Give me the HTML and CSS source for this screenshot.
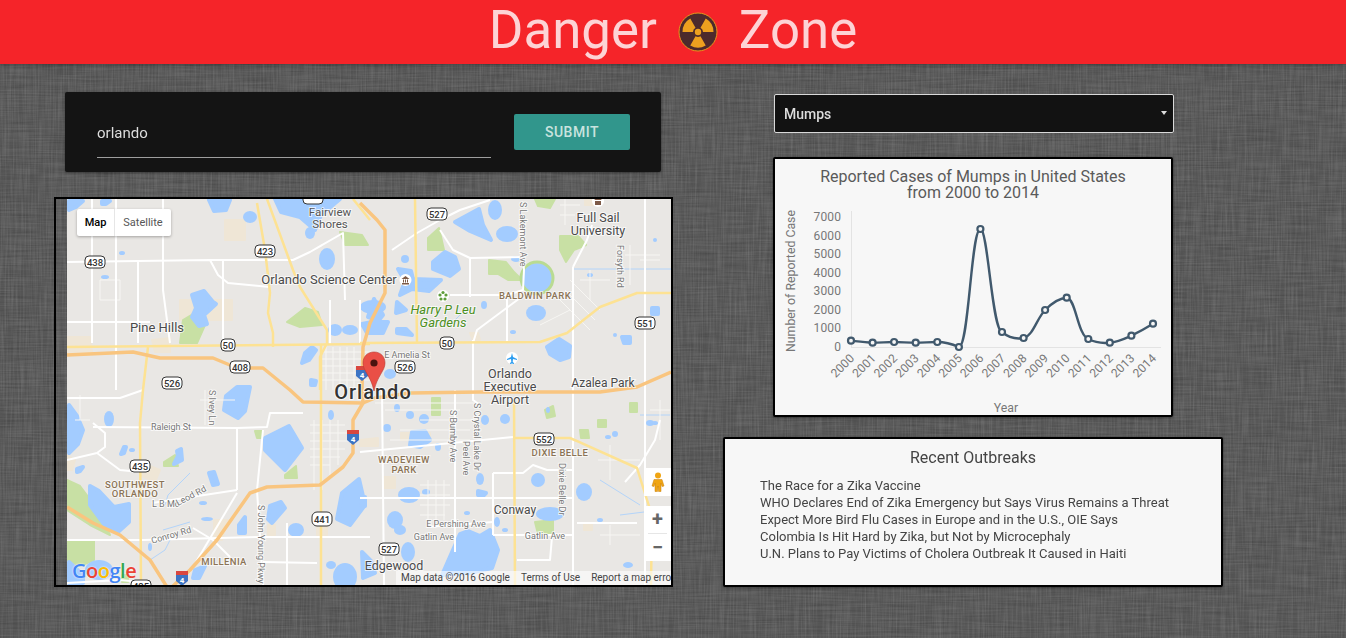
FILE: index.html
```html
<!DOCTYPE html>
<html>
<head>
	<meta charset="utf-8">
	<title>Danger Zone</title>
	<link rel="stylesheet" href="styles.css">
</head>
<body>
	<!-- linen background -->
	<svg class="linen" width="100%" height="100%">
		<filter id="threadsH" x="0" y="0" width="100%" height="100%">
			<feTurbulence type="fractalNoise" baseFrequency=".025 .6" numOctaves="2" seed="4"/>
			<feColorMatrix type="matrix" values="0 0 0 0 0  0 0 0 0 0  0 0 0 0 0  .3 0 0 0 -.07"/>
		</filter>
		<filter id="threadsV" x="0" y="0" width="100%" height="100%">
			<feTurbulence type="fractalNoise" baseFrequency=".6 .025" numOctaves="2" seed="9"/>
			<feColorMatrix type="matrix" values="0 0 0 0 1  0 0 0 0 1  0 0 0 0 1  .2 0 0 0 -.07"/>
		</filter>
		<rect width="100%" height="100%" filter="url(#threadsH)"/>
		<rect width="100%" height="100%" filter="url(#threadsV)"/>
	</svg>

	<header class="topbar">
		<h1>Danger</h1>
		<svg class="hazard" viewBox="0 0 40 40">
			<circle class="hazard-disc" cx="20" cy="20" r="19"/>
			<path class="hazard-blade" d="M22.5 24.33L27.75 33.42A15.5 15.5 0 0 1 12.25 33.42L17.5 24.33A5 5 0 0 0 22.5 24.33Z"/>
			<path class="hazard-blade" d="M22.5 15.67L27.75 6.58A15.5 15.5 0 0 1 35.5 20L25 20A5 5 0 0 0 22.5 15.67Z"/>
			<path class="hazard-blade" d="M15 20L4.5 20A15.5 15.5 0 0 1 12.25 6.58L17.5 15.67A5 5 0 0 0 15 20Z"/>
			<circle class="hazard-blade" cx="20" cy="20" r="3.2"/>
		</svg>
		<h1>Zone</h1>
	</header>

	<main class="layout">
		<section class="left">
			<form class="search">
				<input class="search-input" type="text" value="orlando">
				<button class="search-btn" type="button">SUBMIT</button>
			</form>

			<div class="map">
				<div class="map-canvas">
					<svg class="map-art" viewBox="67 199 604 386">
						<rect x="67" y="199" width="604" height="386" fill="#e9e7e4"/>

						<!-- parks and built up patches -->
						<g class="patch">
							<path d="M67 337L90 337L92 352L67 353Z"/>
							<path d="M152 340L170 338L170 352L155 352Z"/>
							<path d="M383 477L395 477L395 488L383 488Z"/>
							<path d="M268 525L275 525L275 535L268 535Z"/>
							<path d="M214 520L228 520L222 540L214 540Z"/>
							<path d="M317 525L327 525L327 535L317 535Z"/>
							<path d="M473 340L470 333L478 333L480 340Z"/>
							<path d="M584 523L592 523L592 530L584 530Z"/>
							<path d="M360 440L378 438L378 446L360 446Z"/>
							<path d="M401 433L430 433L430 440L401 440Z"/>
							<path d="M142 463L160 470L155 482L142 476Z"/>
							<path d="M225 220L245 220L245 240L225 240Z"/>
							<path d="M180 300L232 300L232 320L180 320Z"/>
							<path d="M585 199L600 199L600 205L585 205Z"/>
							<path d="M67 455L75 460L72 470L67 470Z"/>
						</g>
						<g class="park">
							<path d="M180 343L183 320L198 311L205 325L197 343Z"/>
							<path d="M287 322L305 308L318 312L322 325L300 327Z"/>
							<path d="M340 232L362 235L368 245L345 245Z"/>
							<path d="M428 238L439 228L444 250L428 250Z"/>
							<path d="M489 260L506 262L514 272L522 280L508 280L498 274L489 274Z"/>
							<path d="M560 236L578 236L586 245L574 250L566 262L560 250Z"/>
							<path d="M535 199L555 199L550 208L538 206Z"/>
							<path d="M67 480L80 486L98 510L110 535L90 525L67 510Z"/>
							<path d="M164 462L175 455L178 466L164 466Z"/>
							<path d="M285 475L296 466L297 478L285 478Z"/>
							<path d="M67 541L94 541L94 560L80 566L67 560Z"/>
							<path d="M535 522L553 520L553 534L538 534Z"/>
							<path d="M432 398L440 398L440 415L432 415Z"/>
							<path d="M545 410L553 406L555 416L547 418Z"/>
							<path d="M580 430L588 430L589 438L581 438Z"/>
							<path d="M598 420L606 420L606 427L598 427Z"/>
							<path d="M630 403L637 403L637 412L630 412Z"/>
							<path d="M255 431L262 431L262 438L257 438Z"/>
							<path d="M122 575L128 575L128 582L122 582Z"/>
						</g>

						<!-- water -->
						<g class="water">
							<path d="M69 201L83 201L76 207L69 210Z"/>
							<path d="M102 201L110 201L106 204L102 204Z"/>
							<path d="M209 200L230 200L226 210L214 211Z"/>
							<ellipse cx="250" cy="217" rx="7" ry="6"/>
							<path d="M275 199L340 199L321 215L315 230L300 217L281 212Z"/>
							<ellipse cx="310" cy="233" rx="5" ry="6"/>
							<ellipse cx="327" cy="259" rx="8" ry="11"/>
							<path d="M192 295L204 291L213 302L216 304L204 315L207 324L199 326L192 317L196 308Z"/>
							<ellipse cx="122" cy="253" rx="3" ry="2"/>
							<ellipse cx="105" cy="277" rx="4" ry="2"/>
							<ellipse cx="373" cy="307" rx="13" ry="7"/>
							<path d="M374 299L383 315L379 320L368 317Z"/>
							<path d="M455 222L479 209L483 225L491 240L470 231Z"/>
							<ellipse cx="495" cy="210" rx="7" ry="10"/>
							<ellipse cx="507" cy="234" rx="11" ry="8"/>
							<path d="M433 262L445 252L455 257L459 269L450 276L433 269Z"/>
							<path d="M398 269L411 271L413 279L441 280L429 291L412 289L400 295L405 281Z"/>
							<ellipse cx="405" cy="259" rx="4" ry="4"/>
							<ellipse cx="537" cy="278" rx="15" ry="15"/>
							<ellipse cx="516" cy="259" rx="5" ry="3"/>
							<ellipse cx="536" cy="313" rx="10" ry="8"/>
							<path d="M559 339L570 346L569 357L560 360L550 354L547 347Z"/>
							<ellipse cx="484" cy="305" rx="3" ry="4"/>
							<path d="M362 324L372 322L388 322L383 333L367 333Z"/>
							<path d="M397 302L406 310L396 313Z"/>
							<path d="M397 329L406 329L412 335L397 333Z"/>
							<ellipse cx="335" cy="330" rx="7" ry="6"/>
							<ellipse cx="350" cy="330" rx="8" ry="5"/>
							<path d="M312 347L316 350L309 360L302 363L305 353Z"/>
							<path d="M311 380L316 381L315 385L311 385Z"/>
							<ellipse cx="390" cy="374" rx="6" ry="5"/>
							<path d="M226 396L237 387L250 387L245 411L238 418L224 410Z"/>
							<path d="M265 438L289 426L302 448L285 470L265 450Z"/>
							<path d="M69 405L77 416L83 430L78 444L69 453Z"/>
							<ellipse cx="109" cy="419" rx="5" ry="8"/>
							<path d="M124 447L126 447L124 453L121 454Z"/>
							<path d="M177 451L181 449L182 460L174 464L178 456Z"/>
							<path d="M209 473L214 472L218 484L213 485Z"/>
							<path d="M77 469L83 467L80 471L77 472Z"/>
							<path d="M90 486L99 491L114 507L129 504L129 522L118 532L104 524L90 505Z"/>
							<path d="M239 525L245 517L245 533L239 533Z"/>
							<path d="M270 506L281 502L285 508L272 523L268 519Z"/>
							<ellipse cx="296" cy="530" rx="8" ry="7"/>
							<path d="M342 493L359 479L365 505L350 525L337 519Z"/>
							<ellipse cx="331" cy="415" rx="3" ry="5"/>
							<ellipse cx="99" cy="570" rx="14" ry="10"/>
							<path d="M195 570L205 566L199 578L193 578Z"/>
							<ellipse cx="345" cy="577" rx="12" ry="14"/>
							<ellipse cx="331" cy="565" rx="5" ry="4"/>
							<path d="M69 562L83 575L83 583L69 583Z"/>
							<ellipse cx="409" cy="495" rx="11" ry="8"/>
							<ellipse cx="426" cy="492" rx="4" ry="3"/>
							<ellipse cx="395" cy="520" rx="8" ry="9"/>
							<ellipse cx="400" cy="530" rx="6" ry="5"/>
							<path d="M361 497L365 497L365 506L361 506Z"/>
							<ellipse cx="480" cy="479" rx="4" ry="6"/>
							<path d="M478 491L486 493L483 496L478 495Z"/>
							<path d="M460 534L468 531L480 536L490 530L498 550L492 568L470 573L442 575Z"/>
							<ellipse cx="408" cy="552" rx="7" ry="10"/>
							<path d="M362 552L371 561L375 573L363 578Z"/>
							<ellipse cx="538" cy="480" rx="7" ry="7"/>
							<ellipse cx="584" cy="492" rx="8" ry="9"/>
							<ellipse cx="550" cy="514" rx="14" ry="7"/>
							<ellipse cx="497" cy="522" rx="3" ry="5"/>
							<ellipse cx="505" cy="530" rx="3" ry="2"/>
							<ellipse cx="505" cy="419" rx="5" ry="5"/>
							<ellipse cx="485" cy="420" rx="4" ry="5"/>
							<ellipse cx="424" cy="419" rx="5" ry="5"/>
							<ellipse cx="397" cy="408" rx="3" ry="4"/>
							<ellipse cx="410" cy="415" rx="4" ry="4"/>
							<ellipse cx="387" cy="428" rx="4" ry="4"/>
							<path d="M412 432L425 431L430 440L420 447L410 445Z"/>
							<ellipse cx="438" cy="447" rx="3" ry="4"/>
							<ellipse cx="467" cy="513" rx="3" ry="2"/>
							<path d="M622 337L630 337L630 343L624 343Z"/>
							<path d="M652 308L658 308L658 314L652 314Z"/>
							<ellipse cx="650" cy="423" rx="4" ry="3"/>
							<ellipse cx="615" cy="434" rx="3" ry="3"/>
							<ellipse cx="628" cy="565" rx="5" ry="3"/>
							<ellipse cx="655" cy="240" rx="2" ry="2"/>
							<ellipse cx="590" cy="275" rx="3" ry="2"/>
							<ellipse cx="615" cy="335" rx="2" ry="2"/>
							<ellipse cx="513" cy="332" rx="3" ry="2"/>
							<ellipse cx="132" cy="450" rx="3" ry="2"/>
							<ellipse cx="203" cy="503" rx="4" ry="2"/>
							<ellipse cx="207" cy="519" rx="6" ry="2"/>
							<ellipse cx="150" cy="547" rx="2" ry="4"/>
							<ellipse cx="548" cy="410" rx="2" ry="3"/>
							<ellipse cx="608" cy="437" rx="3" ry="2"/>
							<ellipse cx="655" cy="423" rx="3" ry="2"/>
							<ellipse cx="362" cy="502" rx="3" ry="5"/>
							<ellipse cx="600" cy="520" rx="3" ry="2"/>
						</g>
						<ellipse class="park-rim" cx="537" cy="278" rx="16" ry="16"/>

						<!-- thin water lines -->
						<g class="creek">
							<path d="M574 269L671 269"/>
							<path d="M640 415L670 415"/>
							<path d="M190 473L168 495L165 505"/>
							<path d="M163 530L190 522"/>
							<path d="M150 560L165 550L170 540"/>
							<path d="M465 310L450 325"/>
							<path d="M600 480L640 505"/>
							<path d="M620 515L660 510"/>
						</g>

						<!-- minor street grid -->
						<g class="grid">
							<path d="M320 352L372 352M320 359L372 359M320 366L372 366M320 373L372 373M320 380L372 380M326 347L326 390M333 347L333 390M340 347L340 390M347 347L347 390M354 347L354 390"/>
							<path d="M310 425L345 425M310 433L347 433M310 441L350 441M310 449L345 449M310 457L340 457M310 465L330 465M314 420L314 490M322 420L322 490M330 420L330 475M338 420L338 465"/>
							<path d="M420 485L450 485M420 495L450 495M420 505L450 505M420 515L445 515M428 480L428 520M436 480L436 520M444 480L444 520"/>
							<path d="M375 403L480 403M385 410L460 410M420 420L480 420M400 430L470 430M390 440L470 440"/>
							<path d="M560 300L590 330M565 290L595 320M570 280L600 310"/>
							<path d="M540 325L570 310"/>
							<path d="M100 280L120 280L120 300L100 300Z"/>
							<path d="M580 280L610 280M590 270L590 300"/>
							<path d="M625 255L660 255M630 245L630 285M640 260L660 260"/>
							<path d="M560 205L580 205M560 215L575 215M565 199L565 225"/>
							<path d="M598 460L640 460M610 445L610 480M650 410L670 410M660 400L660 440"/>
							<path d="M600 535L640 535M610 525L610 545"/>
							<path d="M75 420L90 420M80 395L80 420"/>
							<path d="M200 400L235 400M205 390L205 425M213 390L213 425"/>
						</g>

						<!-- white roads -->
						<g class="road">
							<path d="M67 262L210 260L218 275L228 283L270 287"/>
							<path d="M210 260L293 260L310 252L343 233L345 300"/>
							<path d="M92 199L92 343"/>
							<path d="M116 199L116 390"/>
							<path d="M138 262L138 343"/>
							<path d="M163 199L163 290L170 343"/>
							<path d="M223 260L223 343"/>
							<path d="M67 322L150 322"/>
							<path d="M392 250L417 233L440 220L460 210L490 200"/>
							<path d="M440 230L453 250L470 258L523 257"/>
							<path d="M470 258L470 297"/>
							<path d="M450 295L507 295L523 290L524 270L523 258"/>
							<path d="M507 295L507 342"/>
							<path d="M473 343L477 330L520 298"/>
							<path d="M573 267L587 240L592 225"/>
							<path d="M573 267L573 585"/>
							<path d="M645 199L645 585"/>
							<path d="M93 427L237 428L267 427L270 413L303 413"/>
							<path d="M93 423L105 433L105 447L97 453L67 460"/>
							<path d="M97 453L120 470L140 472"/>
							<path d="M237 428L237 490"/>
							<path d="M152 503L237 490"/>
							<path d="M67 540L143 540L257 537L370 537"/>
							<path d="M237 493L193 567"/>
							<path d="M193 528L213 540L230 557"/>
							<path d="M263 430L257 490L263 585"/>
							<path d="M263 562L317 563"/>
							<path d="M287 523L287 585"/>
							<path d="M382 390L384 585"/>
							<path d="M455 390L455 552"/>
							<path d="M360 452L513 437"/>
							<path d="M493 473L523 473L533 465L547 470L573 470"/>
							<path d="M360 498L573 498"/>
							<path d="M493 535L573 535"/>
							<path d="M427 527L493 522"/>
							<path d="M577 523L637 523"/>
							<path d="M517 560L550 560L552 537"/>
							<path d="M493 473L493 535"/>
							<path d="M67 398L120 398L143 390"/>
							<path d="M473 340L473 400L480 405"/>
							<path d="M67 583L120 580L141 582"/>
							<path d="M330 345L330 300"/>
							<path d="M360 343L360 300"/>
							<path d="M625 482L640 465L655 440L660 420"/>
						</g>

						<!-- arterials, light yellow -->
						<g class="artery">
							<path d="M67 347L370 344"/>
							<path d="M360 343L540 342L567 333L600 307L637 293L671 293"/>
							<path d="M257 203L265 250L270 293L268 313L273 333L273 347"/>
							<path d="M148 347L143 390L140 423L141 585"/>
							<path d="M415 199L417 343"/>
							<path d="M321 345L321 585"/>
							<path d="M514 400L515 585"/>
							<path d="M513 438L570 438L637 468L647 500L652 515L651 585"/>
						</g>

						<!-- highways, orange with pale edge -->
						<g class="highway">
							<path d="M67 355L133 352L160 358L213 358L237 368L263 368L290 390L303 402L363 403L375 398L410 393L480 392L600 392L637 387L671 372"/>
							<path d="M360 203L377 220L385 230L385 293L370 323L363 347L362 390L363 403L353 420L353 453L343 467L320 485L267 487L250 493L217 540L190 570L172 587"/>
							<path d="M67 507L93 523L120 535L150 560L167 587"/>
						</g>
						<path class="artery" d="M353 199L370 220M267 199L293 270L300 287L327 330L327 343L320 357L320 390"/>

						<!-- road shields -->
						<g class="shield">
							<rect x="85" y="256" width="20" height="12" rx="4"/><text x="95" y="266">438</text>
							<rect x="255" y="245" width="20" height="12" rx="4"/><text x="265" y="255">423</text>
							<rect x="221" y="339" width="14" height="12" rx="4"/><text x="228" y="349">50</text>
							<rect x="230" y="361" width="20" height="12" rx="4"/><text x="240" y="371">408</text>
							<rect x="162" y="377" width="20" height="12" rx="4"/><text x="172" y="387">526</text>
							<rect x="427" y="208" width="20" height="12" rx="4"/><text x="437" y="218">527</text>
							<rect x="635" y="317" width="20" height="12" rx="4"/><text x="645" y="327">551</text>
							<rect x="440" y="337" width="14" height="12" rx="4"/><text x="447" y="347">50</text>
							<rect x="395" y="361" width="20" height="12" rx="4"/><text x="405" y="371">526</text>
							<rect x="130" y="460" width="20" height="12" rx="4"/><text x="140" y="470">435</text>
							<rect x="312" y="512" width="20" height="14" rx="5"/><text x="322" y="523">441</text>
							<rect x="534" y="433" width="20" height="12" rx="4"/><text x="544" y="443">552</text>
							<rect x="379" y="543" width="20" height="12" rx="4"/><text x="389" y="553">527</text>
							<rect x="131" y="580" width="20" height="12" rx="4"/><text x="141" y="590">435</text>
							<rect x="303" y="192" width="20" height="12" rx="4"/>
						</g>
						<g>
							<path class="i-top" d="M356 366L368 366L368 370L356 370Z"/><path class="i-body" d="M356 370L368 370L368 376L362 381L356 376Z"/><text class="i-num" x="362" y="378">4</text>
							<path class="i-top" d="M347 430L359 430L359 434L347 434Z"/><path class="i-body" d="M347 434L359 434L359 440L353 445L347 440Z"/><text class="i-num" x="353" y="442">4</text>
							<path class="i-top" d="M176 571L188 571L188 575L176 575Z"/><path class="i-body" d="M176 575L188 575L188 581L182 586L176 581Z"/><text class="i-num" x="182" y="583">4</text>
						</g>

						<!-- place icons -->
						<circle class="poi" cx="512" cy="358" r="6"/>
						<path class="plane" d="M512 353L513 357L517 359L517 360L513 359L512.7 362L514 363L514 364L512 363.400L510 364L510 363L511.300 362L511 359L507 360L507 359L511 357Z"/>
						<circle class="poi" cx="405.500" cy="280" r="6"/>
						<path class="museum" d="M401.500 279L405.500 276L409.500 279ZM402 283L409 283L409 284.500L402 284.500ZM403 279.500L404 279.500L404 282.500L403 282.500ZM405 279.500L406 279.500L406 282.500L405 282.500ZM407 279.500L408 279.500L408 282.500L407 282.500Z"/>
						<circle class="poi" cx="443" cy="296" r="6"/>
						<g class="flower">
							<circle cx="443" cy="292.500" r="1.600"/><circle cx="446" cy="295" r="1.600"/><circle cx="445" cy="299" r="1.600"/><circle cx="441" cy="299" r="1.600"/><circle cx="440" cy="295" r="1.600"/>
						</g>
						<circle class="poi" cx="598" cy="201" r="6"/>
						<path class="museum" d="M594 200L598 197L602 200ZM595 201L601 201L601 205L595 205Z"/>

						<!-- labels -->
						<g class="lbl">
							<text x="330" y="216">Fairview</text>
							<text x="330" y="228">Shores</text>
							<text x="598" y="222" class="lbl-md">Full Sail</text>
							<text x="598" y="235" class="lbl-md">University</text>
							<text x="329" y="284" class="lbl-lg">Orlando Science Center</text>
							<text x="157" y="332" class="lbl-lg">Pine Hills</text>
							<text x="510" y="378" class="lbl-md">Orlando</text>
							<text x="510" y="391" class="lbl-md">Executive</text>
							<text x="510" y="404" class="lbl-md">Airport</text>
							<text x="603" y="387" class="lbl-az">Azalea Park</text>
							<text x="515" y="514" class="lbl-az">Conway</text>
							<text x="394" y="570" class="lbl-md">Edgewood</text>
						</g>
						<text class="lbl-city" x="373" y="399">Orlando</text>
						<g class="lbl-park">
							<text x="443" y="314">Harry P Leu</text>
							<text x="443" y="327">Gardens</text>
						</g>
						<g class="lbl-area">
							<text x="535" y="299">BALDWIN PARK</text>
							<text x="135" y="488">SOUTHWEST</text>
							<text x="135" y="497">ORLANDO</text>
							<text x="404" y="463">WADEVIEW</text>
							<text x="404" y="473">PARK</text>
							<text x="560" y="456">DIXIE BELLE</text>
							<text x="224" y="565">MILLENIA</text>
						</g>
						<g class="lbl-road">
							<text x="407" y="358">E Amelia St</text>
							<text x="171" y="430">Raleigh St</text>
							<text x="456" y="527">E Pershing Ave</text>
							<text x="434" y="540">Gatlin Ave</text>
							<text x="545" y="539">Gatlin Ave</text>
							<text transform="translate(172 538) rotate(-16)">Conroy Rd</text>
							<text x="152" y="507" class="lbl-flat">L B Mc</text>
							<text transform="translate(178 506) rotate(-28)" class="lbl-flat">Leod Rd</text>
							<text transform="translate(520 202) rotate(90)" class="lbl-flat">S Lakemont Ave</text>
							<text transform="translate(617 245) rotate(90)" class="lbl-flat">Forsyth Rd</text>
							<text transform="translate(209 390) rotate(90)" class="lbl-flat">S Ivey Ln</text>
							<text transform="translate(258 505) rotate(90)" class="lbl-flat">S John Young Pkwy</text>
							<text transform="translate(450 410) rotate(90)" class="lbl-flat">S Bumby Ave</text>
							<text transform="translate(463 441) rotate(90)" class="lbl-flat">Peel Ave</text>
							<text transform="translate(474 403) rotate(90)" class="lbl-flat">S Crystal Lake Dr</text>
							<text transform="translate(559 463) rotate(90)" class="lbl-flat">Dixie Belle Dr</text>
						</g>

						<!-- pin -->
						<path class="pin" d="M374 352C381 352 385 357 385 363C385 371 377 376 374 391C371 376 363 371 363 363C363 357 367 352 374 352Z"/>
						<circle class="pin-dot" cx="374" cy="363" r="3.600"/>
					</svg>

					<div class="map-type">
						<span class="map-type-on">Map</span>
						<span class="map-type-off">Satellite</span>
					</div>
					<div class="pegman">
						<svg width="14" height="20" viewBox="0 0 14 20">
							<circle cx="7" cy="3.500" r="3" fill="#f0a513"/>
							<path d="M3 7.500L11 7.500L13 14L11 14.500L10 11L10 19.500L7.500 19.500L7 14L6.500 19.500L4 19.500L4 11L3 14.500L1 14Z" fill="#f0a513" stroke="#c87f0a" stroke-width=".5"/>
						</svg>
					</div>
					<div class="zoom-box">
						<span class="zoom-btn">+</span>
						<span class="zoom-line"></span>
						<span class="zoom-btn">−</span>
					</div>
					<div class="google"><b class="g-b">G</b><b class="g-r">o</b><b class="g-y">o</b><b class="g-b">g</b><b class="g-g">l</b><b class="g-r">e</b></div>
					<div class="attrib">
						<span>Map data ©2016 Google</span>
						<span>Terms of Use</span>
						<span>Report a map error</span>
					</div>
				</div>
			</div>
		</section>

		<section class="right">
			<div class="disease-wrap">
				<select class="disease">
					<option>Mumps</option>
				</select>
			</div>

			<div class="chart">
				<svg class="chart-art" viewBox="775 159 396 256">
					<rect x="775" y="159" width="396" height="256" fill="#f7f7f7"/>
					<text class="chart-title" x="973" y="182">Reported Cases of Mumps in United States</text>
					<text class="chart-title" x="973" y="198">from 2000 to 2014</text>
					<path class="axis" d="M851.500 211L851.500 347M851 347.500L1161 347.500"/>
					<g class="ytick">
						<text x="841" y="221">7000</text>
						<text x="841" y="240">6000</text>
						<text x="841" y="258">5000</text>
						<text x="841" y="277">4000</text>
						<text x="841" y="295">3000</text>
						<text x="841" y="314">2000</text>
						<text x="841" y="332">1000</text>
						<text x="841" y="351">0</text>
					</g>
					<text class="axis-name" transform="translate(795 281) rotate(-90)">Number of Reported Case</text>
					<g class="xtick">
						<text transform="translate(855 359) rotate(-45)">2000</text>
						<text transform="translate(876.600 359) rotate(-45)">2001</text>
						<text transform="translate(898.100 359) rotate(-45)">2002</text>
						<text transform="translate(919.700 359) rotate(-45)">2003</text>
						<text transform="translate(941.300 359) rotate(-45)">2004</text>
						<text transform="translate(962.900 359) rotate(-45)">2005</text>
						<text transform="translate(984.400 359) rotate(-45)">2006</text>
						<text transform="translate(1006 359) rotate(-45)">2007</text>
						<text transform="translate(1027.600 359) rotate(-45)">2008</text>
						<text transform="translate(1049.100 359) rotate(-45)">2009</text>
						<text transform="translate(1070.700 359) rotate(-45)">2010</text>
						<text transform="translate(1092.300 359) rotate(-45)">2011</text>
						<text transform="translate(1113.800 359) rotate(-45)">2012</text>
						<text transform="translate(1135.400 359) rotate(-45)">2013</text>
						<text transform="translate(1157 359) rotate(-45)">2014</text>
					</g>
					<text class="axis-name" x="1006" y="412">Year</text>
					<path class="series" d="M851 340.700C858 341.500 865 342.500 872.600 342.700C880 342.700 887 342 894.100 342C901 342 908 342.700 915.700 342.700C923 342.700 930 342 937.300 342C945 342 952 344 958.900 347C969 347 971 229 980.400 229C988 229 992 330 1002 332C1008 337 1016 339.500 1023.600 338C1033 336 1037 318 1045.100 310C1052 303 1059 298 1066.700 297.700C1076 298 1077 334 1088.300 339C1095 342.500 1102 343.500 1109.800 342.700C1118 342 1124 339 1131.400 335.700C1139 332 1146 328 1153 323.700"/>
					<g class="dots">
						<circle cx="851" cy="340.700" r="3"/>
						<circle cx="872.600" cy="342.700" r="3"/>
						<circle cx="894.100" cy="342" r="3"/>
						<circle cx="915.700" cy="342.700" r="3"/>
						<circle cx="937.300" cy="342" r="3"/>
						<circle cx="958.900" cy="347" r="3"/>
						<circle cx="980.400" cy="229" r="3"/>
						<circle cx="1002" cy="332" r="3"/>
						<circle cx="1023.600" cy="338" r="3"/>
						<circle cx="1045.100" cy="310" r="3"/>
						<circle cx="1066.700" cy="297.700" r="3"/>
						<circle cx="1088.300" cy="339" r="3"/>
						<circle cx="1109.800" cy="342.700" r="3"/>
						<circle cx="1131.400" cy="335.700" r="3"/>
						<circle cx="1153" cy="323.700" r="3"/>
					</g>
				</svg>
			</div>

			<div class="news">
				<h2>Recent Outbreaks</h2>
				<ul>
					<li>The Race for a Zika Vaccine</li>
					<li>WHO Declares End of Zika Emergency but Says Virus Remains a Threat</li>
					<li>Expect More Bird Flu Cases in Europe and in the U.S., OIE Says</li>
					<li>Colombia Is Hit Hard by Zika, but Not by Microcephaly</li>
					<li>U.N. Plans to Pay Victims of Cholera Outbreak It Caused in Haiti</li>
				</ul>
			</div>
		</section>
	</main>
</body>
</html>
```

FILE: styles.css
```css
*{margin: 0;padding: 0;box-sizing: border-box;}
html,body{height: 100%;}
body{overflow: hidden; font-family: Roboto, "Liberation Sans", sans-serif; background-color: #5e5e5e;}
.linen{position: fixed; left: 0; top: 0; z-index: -1;}

/* header */
.topbar{display: flex; justify-content: center; align-items: center; gap: 21px; height: 64px; padding-bottom: 4px; background: #f52429; box-shadow: 0 1px 4px rgba(0,0,0,.35);}
.topbar h1{font-size: 52.800px; font-weight: 400; line-height: 60px; color: #fdd3d5;}
.hazard{display: block; width: 40px; height: 40px; margin-top: 3px;}
.hazard-disc{fill: #4c2a2c; stroke: #e8951c; stroke-width: 1;}
.hazard-blade{fill: #eda01f;}

/* columns */
.layout{display: flex; align-items: flex-start; padding: 28px 0 0 54px;}
.left{width: 619px;}
.right{display: flex; flex-direction: column; align-items: center; width: 500px; margin-left: 50px; padding-top: 2px;}

/* search */
.search{display: flex; align-items: flex-start; width: 596px; height: 80px; margin: 0 0 25px 11px; padding: 22px 31px 0 32px; background: #141414; border-radius: 2px; box-shadow: 0 1px 3px rgba(0,0,0,.4);}
.search-input{width: 394px; height: 44px; padding-bottom: 5px; background: none; border: none; border-bottom: 1px solid #9e9e9e; outline: none; font-family: inherit; font-size: 15px; color: #ddd;}
.search-btn{width: 116px; height: 36px; margin-left: 23px; background: #31968c; border: none; border-radius: 2px; font-family: inherit; font-size: 14px; font-weight: 500; letter-spacing: .5px; color: #c9e3df;}

/* map */
.map{width: 619px; height: 390px; padding-left: 11px; border: 2px solid #000;}
.map-canvas{position: relative; width: 604px; height: 386px; overflow: hidden;}
.map-art{display: block; width: 604px; height: 386px;}
.park path{fill: #c8e0a4; stroke: #c8e0a4; stroke-width: 2; stroke-linejoin: round;}
.patch path{fill: #efe6d6; stroke: #efe6d6; stroke-width: 2; stroke-linejoin: round;}
.water path,.water ellipse{fill: #a3ccff;}
.water path{stroke: #a3ccff; stroke-width: 4; stroke-linejoin: round;}
.park-rim{fill: none; stroke: #b9db92; stroke-width: 3;}
.creek path{fill: none; stroke: #b3d4fa; stroke-width: 1;}
.grid path{fill: none; stroke: #f7f6f3; stroke-width: 1;}
.road path{fill: none; stroke: #fff; stroke-width: 2; stroke-linejoin: round;}
.artery,.artery path{fill: none; stroke: #fde293; stroke-width: 2.500; stroke-linejoin: round;}
.highway path{fill: none; stroke: #f9c57f; stroke-width: 3.500; stroke-linejoin: round;}
.shield rect{fill: #fff; stroke: #333; stroke-width: 1;}
.shield text{font-size: 9.500px; font-weight: 500; fill: #333; text-anchor: middle;}
.i-top{fill: #d9473f;}
.i-body{fill: #3d74c4;}
.i-num{font-size: 8px; font-weight: 700; fill: #fff; text-anchor: middle;}
.poi{fill: #fff;}
.plane{fill: #2a9cf0;}
.museum{fill: #7d5a48;}
.flower circle{fill: #5e9c3a;}
.lbl text{font-size: 11.500px; fill: #555; text-anchor: middle; stroke: #fff; stroke-width: 2; stroke-opacity: .7; paint-order: stroke;}
.lbl .lbl-md{font-size: 12.500px; fill: #4a4a4a;}
.lbl .lbl-lg{font-size: 13px; fill: #4a4a4a;}
.lbl .lbl-az{font-size: 12px; fill: #4a4a4a;}
.lbl-city{font-size: 20px; font-weight: 500; letter-spacing: 1px; fill: #333; text-anchor: middle; stroke: #fff; stroke-width: 2; stroke-opacity: .7; paint-order: stroke;}
.lbl-park text{font-size: 13px; font-style: italic; fill: #4c8f1e; text-anchor: middle; stroke: #fff; stroke-width: 2; stroke-opacity: .6; paint-order: stroke;}
.lbl-area text{font-size: 9.500px; font-weight: 500; letter-spacing: .4px; fill: #8b7355; text-anchor: middle; stroke: #fff; stroke-width: 2; stroke-opacity: .6; paint-order: stroke;}
.lbl-road text{font-size: 9px; fill: #777; text-anchor: middle; stroke: #fff; stroke-width: 2; stroke-opacity: .7; paint-order: stroke;}
.lbl-road .lbl-flat{text-anchor: start;}
.pin{fill: #ea4f46; stroke: #b93a32; stroke-width: .6;}
.pin-dot{fill: #4a1310;}

/* map controls */
.map-type{position: absolute; left: 10px; top: 10px; display: flex; height: 27px; background: #fff; border-radius: 2px; box-shadow: 0 1px 3px rgba(0,0,0,.3); font-size: 11px; line-height: 27px;}
.map-type-on{width: 38px; text-align: center; font-weight: 500; color: #000; border-right: 1px solid #e6e6e6;}
.map-type-off{width: 56px; text-align: center; color: #565656;}
.pegman{position: absolute; left: 577px; top: 269px; display: flex; justify-content: center; align-items: center; width: 27px; height: 28px; background: #fff;}
.zoom-box{position: absolute; left: 577px; top: 307px; display: flex; flex-direction: column; align-items: center; width: 27px; height: 55px; background: #fff;}
.zoom-btn{height: 27px; font-size: 20px; font-weight: 700; line-height: 27px; color: #666;}
.zoom-line{width: 19px; height: 1px; background: #e6e6e6;}
.google{position: absolute; left: 5px; top: 359px; font-family: "Open Sans", sans-serif; font-size: 20px; line-height: 26px; letter-spacing: -.5px; text-shadow: 0 0 2px #fff;}
.google b{font-weight: 600;}
.g-b{color: #4285f4;}
.g-r{color: #ea4335;}
.g-y{color: #fbbc05;}
.g-g{color: #34a853;}
.attrib{position: absolute; left: 329px; bottom: 0; display: flex; gap: 11px; height: 14px; padding: 0 5px; background: rgba(255,255,255,.6); font-size: 10px; line-height: 14px; white-space: nowrap; color: #444;}

/* disease select */
.disease-wrap{position: relative; width: 400px; height: 39px; margin-left: 2px;}
.disease-wrap::after{content: ""; position: absolute; right: 7px; top: 17px; border-style: solid; border-width: 4px 3px 0 3px; border-color: #ddd transparent transparent transparent;}
.disease{display: block; width: 100%; height: 100%; padding-left: 9px; appearance: none; background: #121212; border: 1px solid #d9d9d9; border-radius: 2px; font-family: inherit; font-size: 14px; font-weight: 500; color: #ddd; outline: none;}

/* chart */
.chart{width: 400px; height: 260px; margin: 24px 1px 0 0; background: #f7f7f7; border: 2px solid #000; border-radius: 2px; box-shadow: 0 1px 3px rgba(0,0,0,.4);}
.chart-art{display: block; width: 396px; height: 256px;}
.chart-title{font-size: 16px; font-weight: 400; fill: #5a5a5a; text-anchor: middle;}
.axis{fill: none; stroke: #e3e3e3; stroke-width: 1;}
.ytick text{font-size: 12px; letter-spacing: .1px; fill: #777; text-anchor: end;}
.xtick text{font-size: 12px; letter-spacing: .1px; fill: #777; text-anchor: end;}
.axis-name{font-size: 12.300px; fill: #777; text-anchor: middle;}
.series{fill: none; stroke: #41596d; stroke-width: 2.400;}
.dots circle{fill: #f7f7f7; stroke: #41596d; stroke-width: 2.200;}

/* news */
.news{width: 500px; height: 150px; margin-top: 20px; padding-top: 9px; background: #f7f7f7; border: 2px solid #000; border-radius: 2px; box-shadow: 0 1px 3px rgba(0,0,0,.4);}
.news h2{font-size: 16px; font-weight: 400; line-height: 20px; text-align: center; color: #444;}
.news ul{margin-top: 9px; padding-left: 35px; list-style: none;}
.news li{font-size: 13px; font-weight: 400; line-height: 17px; color: #444;}
```
